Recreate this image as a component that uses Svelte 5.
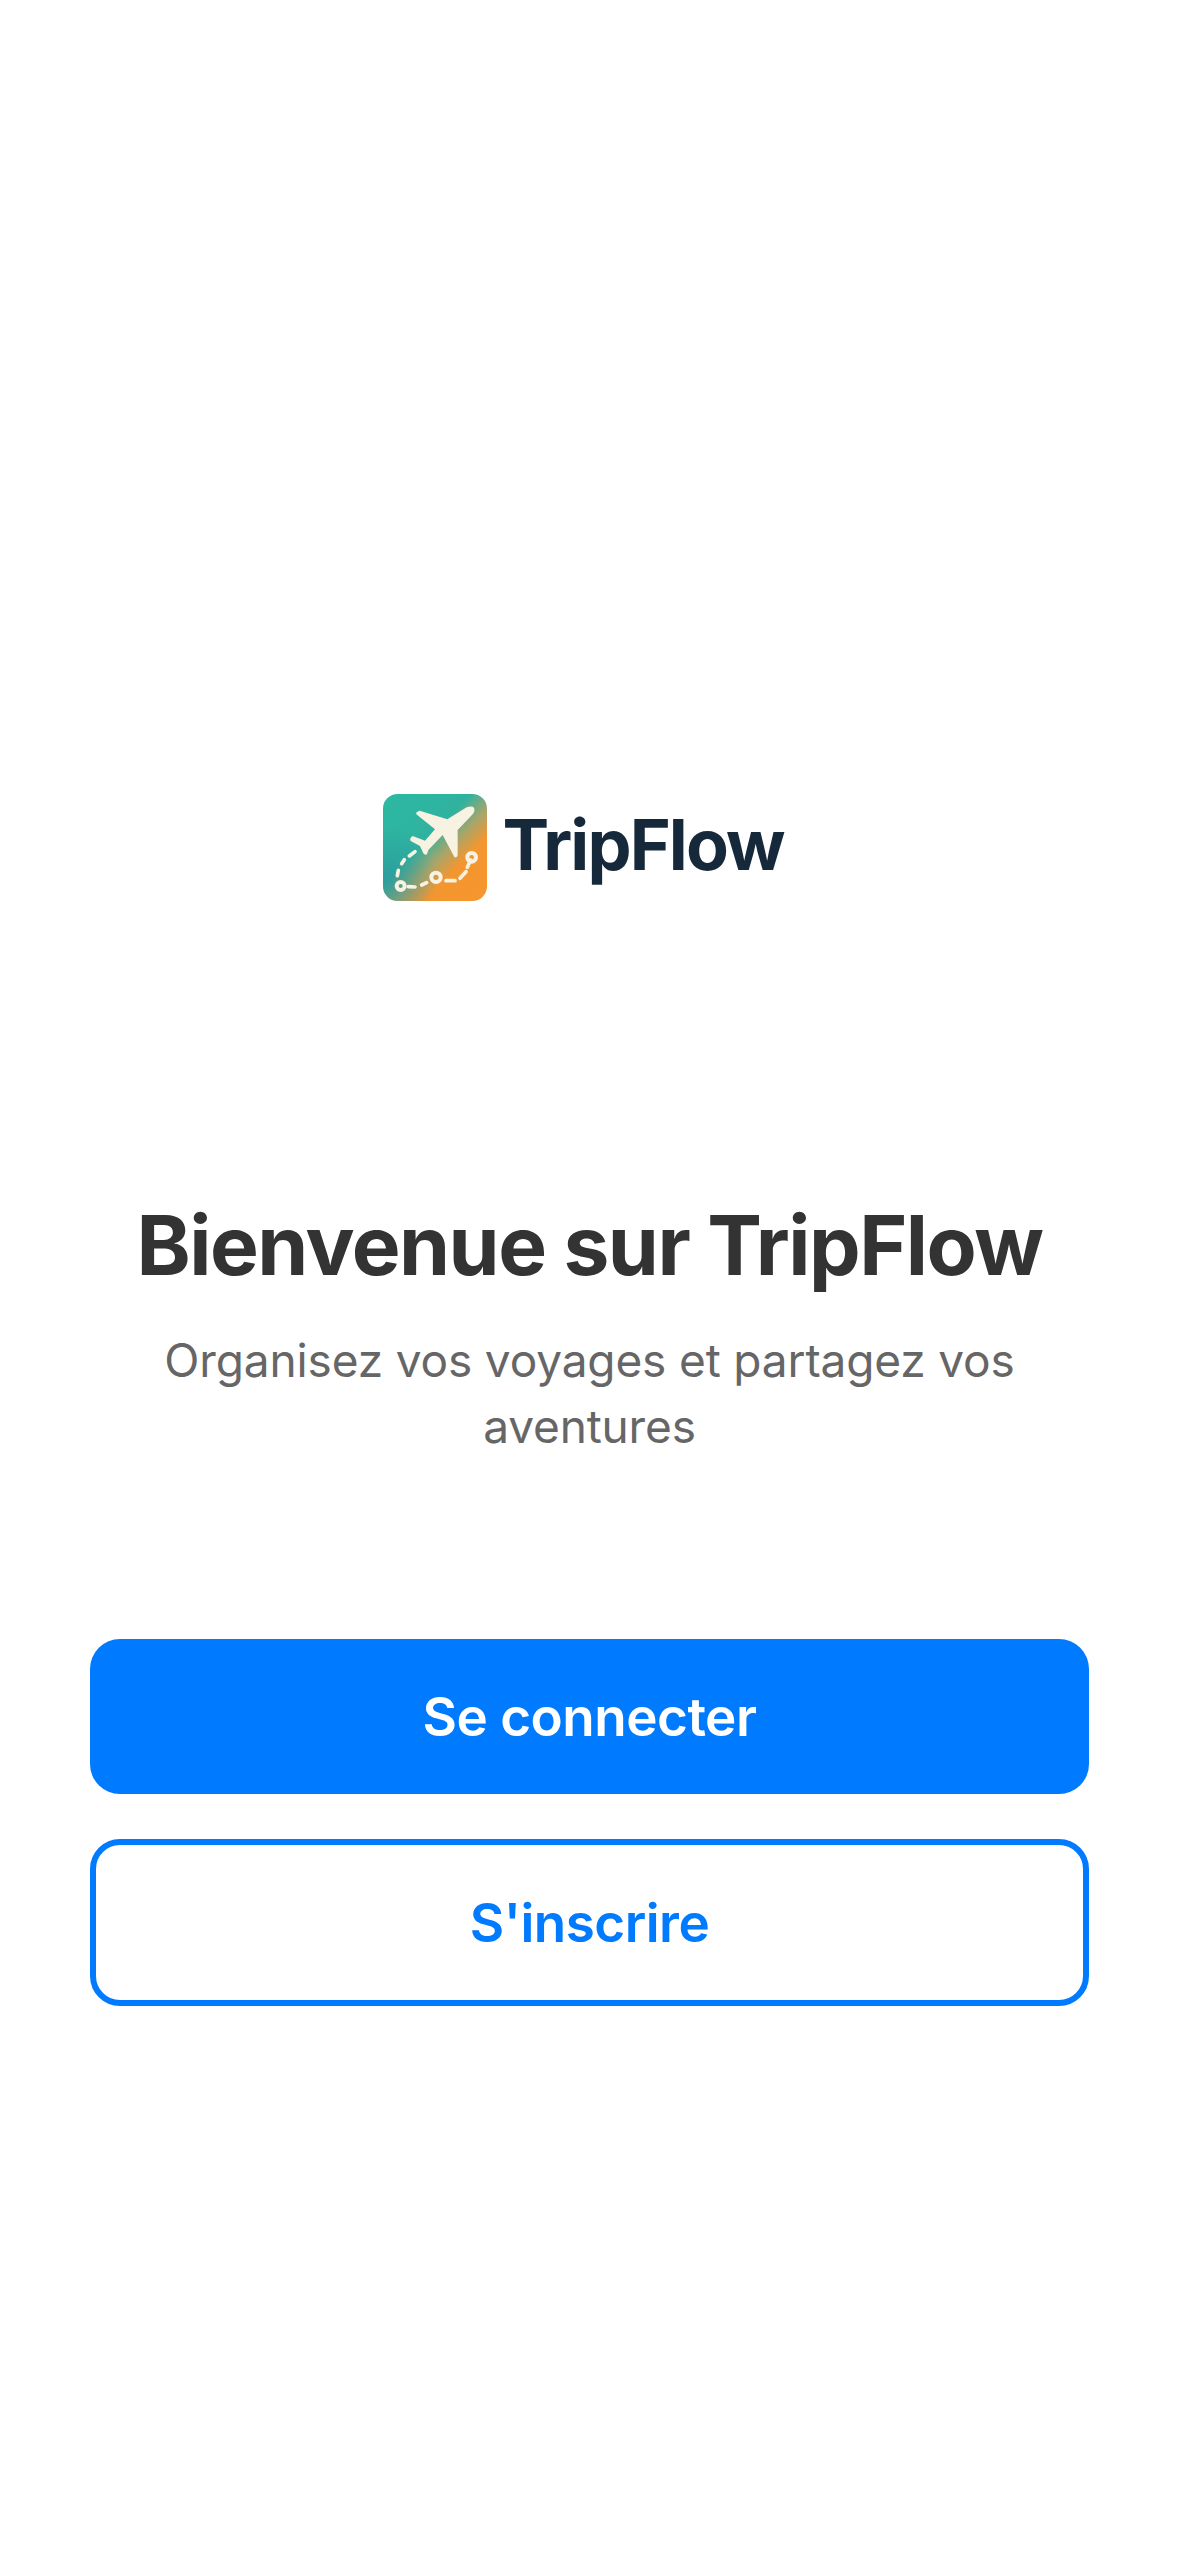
<script>
  const dashes = [
    'M67 272 L70 256',
    'M80 236 L88 224',
    'M103 213 L120 200',
    'M100 305 L120 306',
    'M140 300 L155 293',
    'M213 287 L240 287',
    'M255 280 L273 260',
    'M277 247 L287 225'
  ];
</script>

<main class="welcome">
  <div class="logo">
    <svg class="mark" viewBox="24 27 312 321" aria-hidden="true">
      <defs>
        <linearGradient id="tile" x1="0" y1="0" x2="1" y2="1">
          <stop offset="0" stop-color="#2cb9a3" />
          <stop offset="0.42" stop-color="#2fb29f" />
          <stop offset="0.57" stop-color="#a8a56a" />
          <stop offset="0.7" stop-color="#f4962f" />
          <stop offset="1" stop-color="#f5962e" />
        </linearGradient>
        <radialGradient id="shade" cx="0.02" cy="0.8" r="0.5">
          <stop offset="0" stop-color="#2a8f9c" stop-opacity="0.6" />
          <stop offset="1" stop-color="#2a8f9c" stop-opacity="0" />
        </radialGradient>
      </defs>
      <rect x="24" y="27" width="312" height="321" rx="44" fill="url(#tile)" />
      <rect x="24" y="27" width="312" height="321" rx="44" fill="url(#shade)" />
      <path class="plane" d="M124 88 Q121 81 134 77 L217 103 L275 67 Q290 61 297 68 Q301 78 293 88 L248 135 L248 210 Q246 220 238 216 L203 150 L160 195 L156 208 Q150 212 145 205 L135 183 L107 168 Q102 160 113 153 L150 167 L180 133 Z" />
      <g class="route">
        {#each dashes as d}
          <path {d} />
        {/each}
      </g>
      <circle class="stop" cx="77" cy="303" r="12" />
      <circle class="stop" cx="183" cy="277" r="14" />
      <circle class="stop" cx="290" cy="217" r="13" />
    </svg>
    <span class="wordmark">TripFlow</span>
  </div>

  <h1>Bienvenue sur TripFlow</h1>
  <p class="lede">Organisez vos voyages et partagez vos aventures</p>

  <div class="actions">
    <button class="btn primary">Se connecter</button>
    <button class="btn secondary">S'inscrire</button>
  </div>
</main>

<style>
  :global(body) { background: #fff; font-family: Inter, "Noto Sans", sans-serif; }
  .welcome { display: flex; flex-direction: column; align-items: center; min-height: 2556px; box-sizing: border-box; padding: 794px 90px 0; }
  .logo { display: flex; align-items: center; gap: 15px; height: 107px; margin-right: 12px; filter: blur(0.5px); }
  .mark { display: block; width: 104px; height: 107px; }
  .plane { fill: #f8f2e2; }
  .route path { fill: none; stroke: #f8f2e2; stroke-width: 11; stroke-linecap: round; }
  .stop { fill: none; stroke: #f8f2e2; stroke-width: 12; }
  .wordmark { margin-bottom: 6px; color: #16293b; font-size: 70px; font-weight: 700; letter-spacing: -1.9px; line-height: 107px; }
  h1 { margin: 295px 0 0; color: #333; font-size: 82px; font-weight: 700; letter-spacing: -1.5px; line-height: 100px; text-align: center; white-space: nowrap; }
  .lede { margin: 31px 0 0; color: #666; font-size: 46px; letter-spacing: -0.15px; line-height: 66px; text-align: center; }
  .actions { display: flex; flex-direction: column; gap: 45px; align-self: stretch; margin-top: 180px; }
  .btn { border-radius: 30px; font-family: inherit; font-size: 53px; font-weight: 600; letter-spacing: -0.5px; }
  .primary { height: 155px; border: 0; color: #fff; background: #007aff; }
  .secondary { height: 167px; border: 6px solid #007aff; color: #007aff; background: #fff; }
</style>
